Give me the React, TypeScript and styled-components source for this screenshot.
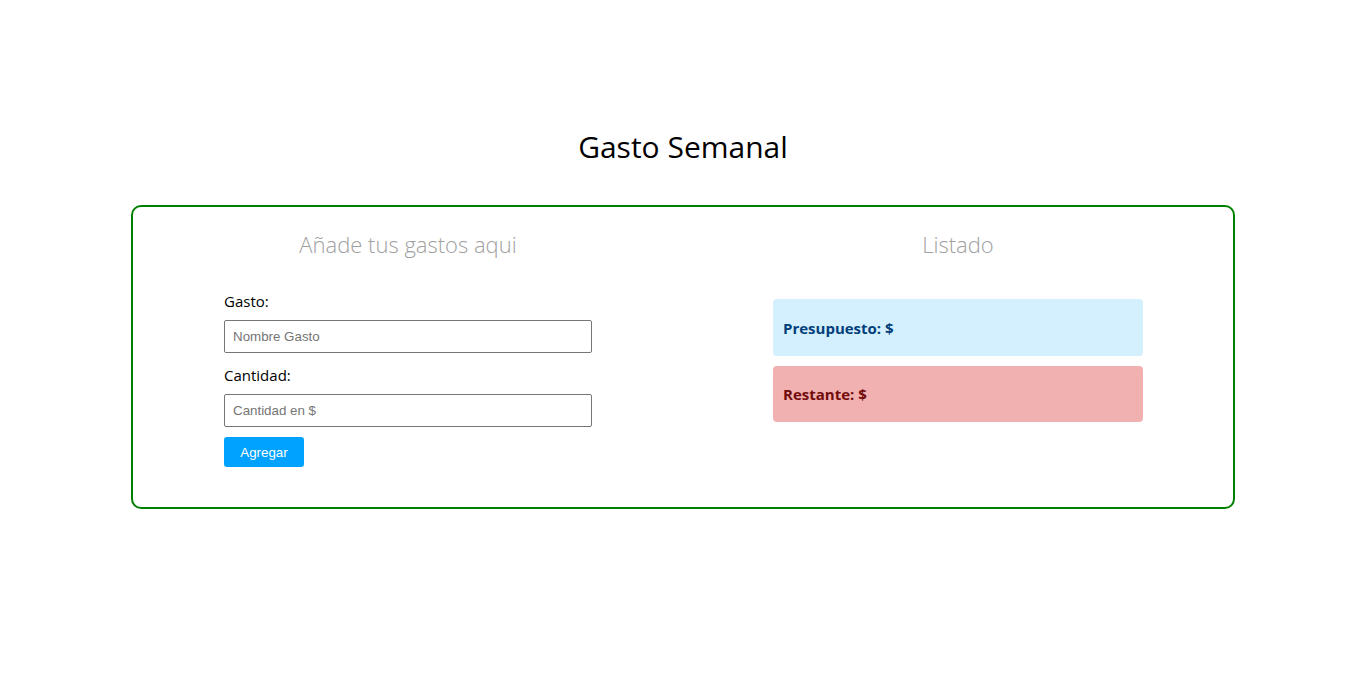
import React from "react";
import styled, { createGlobalStyle } from "styled-components";

const Global = createGlobalStyle`
  html, body { margin: 0; padding: 0; background: #fff; }
  body { font-family: "Open Sans", "Noto Sans", sans-serif; color: #000; }
  * { box-sizing: border-box; }
`;

const Page = styled.div`
  display: flex;
  flex-direction: column;
  align-items: center;
  padding-top: 125px;
`;

const Title = styled.h1`
  margin: 0 0 37px;
  font-size: 30px;
  line-height: 43px;
  font-weight: 400;
`;

const Card = styled.div`
  width: 1104px;
  border: 2px solid #008000;
  border-radius: 10px;
  display: grid;
  grid-template-columns: 1fr 1fr;
  padding: 21px 0 40px;
`;

const Column = styled.div`
  display: flex;
  flex-direction: column;
  align-items: center;
`;

const Heading = styled.h2`
  margin: 0;
  font-size: 22px;
  line-height: 33px;
  font-weight: 300;
  color: #a0a0a0;
`;

const Form = styled.form`
  width: 368px;
  display: flex;
  flex-direction: column;
  align-items: flex-start;
  margin-top: 29px;
`;

const Label = styled.label`
  font-size: 15px;
  line-height: 22px;
  margin-bottom: 8px;
`;

const Input = styled.input<{ $mb: number }>`
  width: 100%;
  height: 33px;
  border: 1px solid #767676;
  border-radius: 2px;
  padding: 0 8px;
  font-family: "Liberation Sans", Arial, sans-serif;
  font-size: 13.33px;
  margin-bottom: ${(p) => p.$mb}px;
  &::placeholder { color: #757575; }
`;

const Button = styled.button`
  width: 80px;
  height: 30px;
  border: none;
  border-radius: 3px;
  background: #00a2ff;
  color: #fff;
  font-family: "Liberation Sans", Arial, sans-serif;
  font-size: 13.33px;
  cursor: pointer;
`;

const Alerts = styled.div`
  width: 370px;
  margin-top: 38px;
  display: flex;
  flex-direction: column;
  gap: 10px;
`;

const Alert = styled.div<{ $bg: string; $fg: string; $h: number }>`
  height: ${(p) => p.$h}px;
  display: flex;
  align-items: center;
  padding: 0 10px;
  border-radius: 4px;
  background: ${(p) => p.$bg};
  color: ${(p) => p.$fg};
  font-size: 15px;
  font-weight: 700;
`;

export default function App() {
  return (
    <>
      <Global />
      <Page>
        <Title>Gasto Semanal</Title>
        <Card>
          <Column>
            <Heading>Añade tus gastos aqui</Heading>
            <Form onSubmit={(e) => e.preventDefault()}>
              <Label>Gasto:</Label>
              <Input $mb={11} placeholder="Nombre Gasto" />
              <Label>Cantidad:</Label>
              <Input $mb={10} placeholder="Cantidad en $" />
              <Button type="submit">Agregar</Button>
            </Form>
          </Column>
          <Column>
            <Heading>Listado</Heading>
            <Alerts>
              <Alert $bg="#d4effd" $fg="#033f7a" $h={57}>Presupuesto: $</Alert>
              <Alert $bg="#f1b1b0" $fg="#720b0b" $h={56}>Restante: $</Alert>
            </Alerts>
          </Column>
        </Card>
      </Page>
    </>
  );
}
